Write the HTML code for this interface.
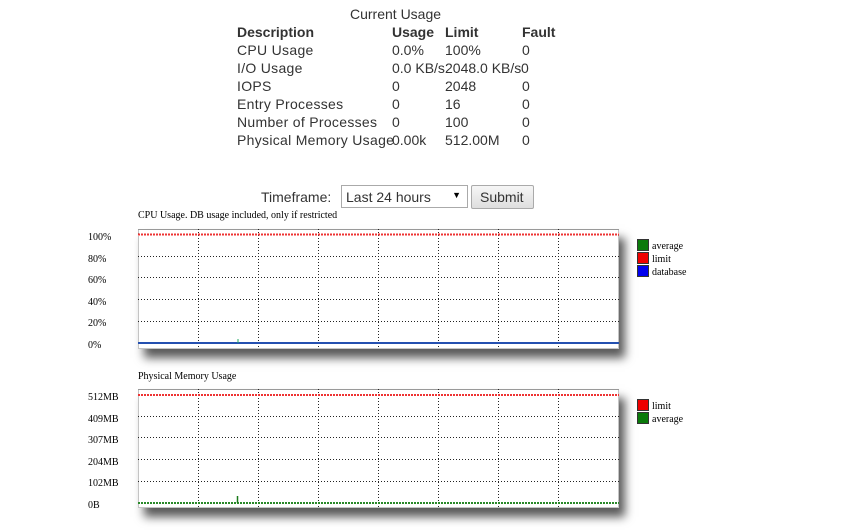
<!DOCTYPE html>
<html><head><meta charset="utf-8"><style>
body{margin:0;width:841px;height:530px;background:#fff;position:relative;overflow:hidden;font-family:"Liberation Sans",sans-serif;color:#333}
.t{position:absolute;font-size:14px;line-height:18px;white-space:nowrap}
.b{font-weight:bold}
.s{position:absolute;font-family:"Liberation Serif",serif;font-size:10px;color:#000;white-space:nowrap;line-height:12px}
.sq{position:absolute;width:10px;height:10px;border:1px solid #333}
.plot{position:absolute;box-shadow:6px 9px 9px rgba(0,0,0,.65)}
</style></head><body>
<div class="t" style="left:350px;top:5px">Current Usage</div>
<div class="t b" style="left:237px;top:23px">Description</div>
<div class="t b" style="left:392px;top:23px">Usage</div>
<div class="t b" style="left:445px;top:23px">Limit</div>
<div class="t b" style="left:522px;top:23px">Fault</div>
<div class="t" style="left:237px;top:41px;letter-spacing:0.3px">CPU Usage<br>I/O Usage<br>IOPS<br>Entry Processes<br>Number of Processes<br>Physical Memory Usage</div>
<div class="t" style="left:392px;top:41px">0.0%<br>0.0 KB/s<br>0<br>0<br>0<br>0.00k</div>
<div class="t" style="left:445px;top:41px">100%<br>2048.0 KB/s<br>2048<br>16<br>100<br>512.00M</div>
<div class="t" style="left:522px;top:41px">0<br><br>0<br>0<br>0<br>0</div>
<div class="t" style="left:521px;top:59px;background:#fff">0</div>

<div class="t" style="left:261px;top:188px">Timeframe:</div>
<div style="position:absolute;left:341px;top:185px;width:125px;height:21px;border:1px solid #aaa;background:#fff"><span class="t" style="left:4px;top:2px">Last 24 hours</span><span style="position:absolute;right:6px;top:4px;font-size:9px;color:#000">▼</span></div>
<div style="position:absolute;left:471px;top:185px;width:61px;height:22px;border:1px solid #aaa;border-radius:2px;background:linear-gradient(#f6f6f6,#dedede)"><span class="t" style="left:8px;top:2px">Submit</span></div>

<div class="s" style="left:138px;top:210px">CPU Usage. DB usage included, only if restricted</div>
<div class="s" style="left:88px;top:232px">100%</div>
<div class="s" style="left:88px;top:254px">80%</div>
<div class="s" style="left:88px;top:275px">60%</div>
<div class="s" style="left:88px;top:297px">40%</div>
<div class="s" style="left:88px;top:318px">20%</div>
<div class="s" style="left:88px;top:340px">0%</div>
<div class="plot" style="left:138px;top:229px;width:481px;height:120px;background:#fff">
<svg width="481" height="120" style="position:absolute;left:0;top:0">
<rect x="0.5" y="0.5" width="480" height="119" fill="none" stroke="#888" stroke-dasharray="1,1"/>
<line x1="0" y1="0.5" x2="481" y2="0.5" stroke="#999"/>
<g stroke="#222" stroke-dasharray="1,2">
<line x1="60.5" y1="0" x2="60.5" y2="120"/><line x1="120.5" y1="0" x2="120.5" y2="120"/><line x1="180.5" y1="0" x2="180.5" y2="120"/><line x1="240.5" y1="0" x2="240.5" y2="120"/><line x1="300.5" y1="0" x2="300.5" y2="120"/><line x1="360.5" y1="0" x2="360.5" y2="120"/><line x1="420.5" y1="0" x2="420.5" y2="120"/>
<line x1="0" y1="27.5" x2="481" y2="27.5"/><line x1="0" y1="48.5" x2="481" y2="48.5"/><line x1="0" y1="70.5" x2="481" y2="70.5"/><line x1="0" y1="92.5" x2="481" y2="92.5"/>
</g>
<line x1="0" y1="5.5" x2="481" y2="5.5" stroke="#e33" stroke-width="2" stroke-dasharray="2,1"/>
<line x1="0" y1="114" x2="481" y2="114" stroke="#2450b0" stroke-width="2"/>
<line x1="100" y1="110" x2="100" y2="114" stroke="#2a6" stroke-width="1"/>
</svg></div>
<div class="sq" style="left:637px;top:239px;background:#0a7a0a"></div>
<div class="sq" style="left:637px;top:252px;background:#e00"></div>
<div class="sq" style="left:637px;top:265px;background:#00e"></div>
<div class="s" style="left:652px;top:241px">average</div>
<div class="s" style="left:652px;top:254px">limit</div>
<div class="s" style="left:652px;top:267px">database</div>

<div class="s" style="left:138px;top:371px">Physical Memory Usage</div>
<div class="s" style="left:88px;top:392px">512MB</div>
<div class="s" style="left:88px;top:414px">409MB</div>
<div class="s" style="left:88px;top:435px">307MB</div>
<div class="s" style="left:88px;top:457px">204MB</div>
<div class="s" style="left:88px;top:478px">102MB</div>
<div class="s" style="left:88px;top:500px">0B</div>
<div class="plot" style="left:138px;top:389px;width:481px;height:119px;background:#fff">
<svg width="481" height="119" style="position:absolute;left:0;top:0">
<rect x="0.5" y="0.5" width="480" height="118" fill="none" stroke="#888" stroke-dasharray="1,1"/>
<line x1="0" y1="0.5" x2="481" y2="0.5" stroke="#999"/>
<g stroke="#222" stroke-dasharray="1,2">
<line x1="60.5" y1="0" x2="60.5" y2="119"/><line x1="120.5" y1="0" x2="120.5" y2="119"/><line x1="180.5" y1="0" x2="180.5" y2="119"/><line x1="240.5" y1="0" x2="240.5" y2="119"/><line x1="300.5" y1="0" x2="300.5" y2="119"/><line x1="360.5" y1="0" x2="360.5" y2="119"/><line x1="420.5" y1="0" x2="420.5" y2="119"/>
<line x1="0" y1="27.5" x2="481" y2="27.5"/><line x1="0" y1="48.5" x2="481" y2="48.5"/><line x1="0" y1="70.5" x2="481" y2="70.5"/><line x1="0" y1="92.5" x2="481" y2="92.5"/>
</g>
<line x1="0" y1="6" x2="481" y2="6" stroke="#e33" stroke-width="2" stroke-dasharray="2,1"/>
<line x1="0" y1="114" x2="481" y2="114" stroke="#2a8a2a" stroke-width="2" stroke-dasharray="2,1"/>
<line x1="99.5" y1="107" x2="99.5" y2="114" stroke="#1a7a1a" stroke-width="1.5"/>
</svg></div>
<div class="sq" style="left:637px;top:399px;background:#e00"></div>
<div class="sq" style="left:637px;top:412px;background:#0a7a0a"></div>
<div class="s" style="left:652px;top:401px">limit</div>
<div class="s" style="left:652px;top:414px">average</div>
</body></html>
